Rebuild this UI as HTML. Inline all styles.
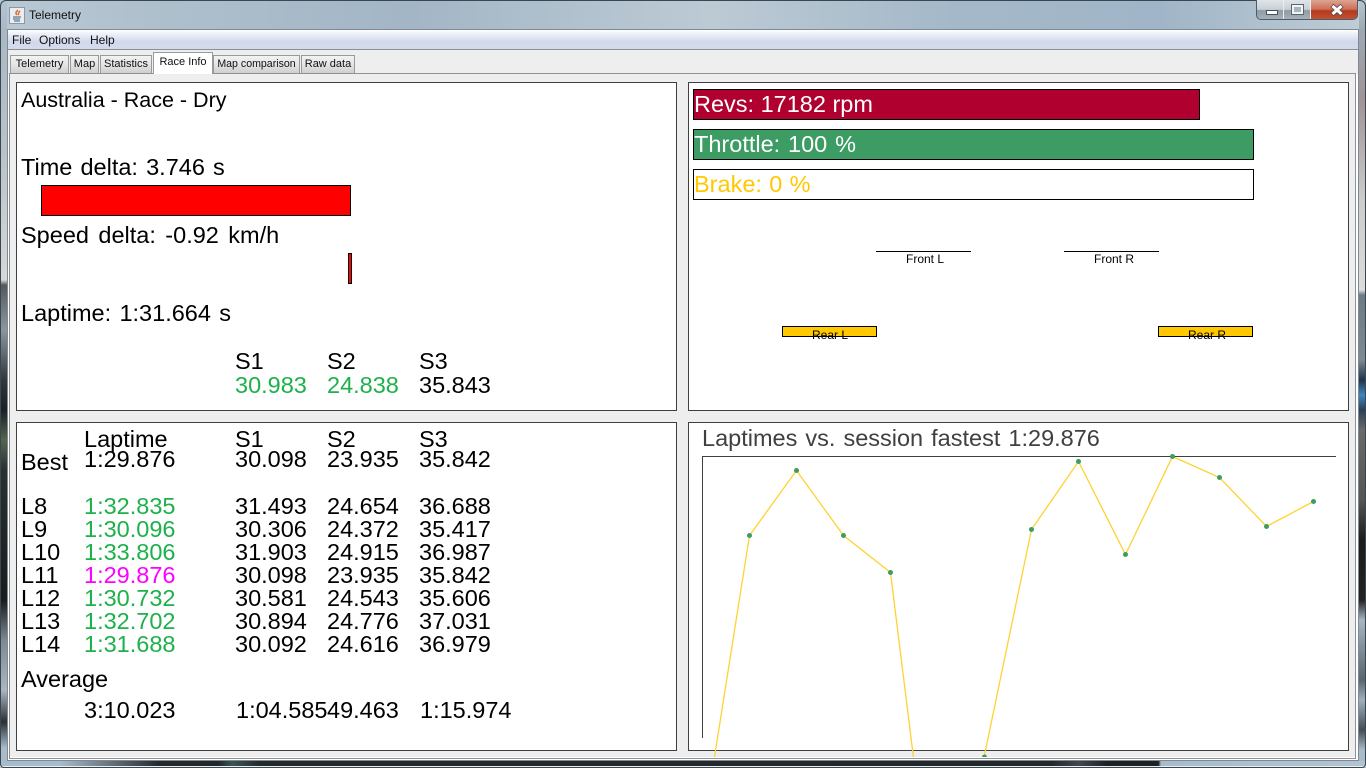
<!DOCTYPE html>
<html><head><meta charset="utf-8"><title>Telemetry</title>
<style>
html,body{margin:0;padding:0;width:1366px;height:768px;overflow:hidden;background:#a9bccb}
body{position:relative;font-family:"Liberation Sans",sans-serif}
div{position:absolute;box-sizing:border-box}
.tab{top:55px;height:18px;font-size:11px;line-height:17px;text-align:center;color:#111;background:linear-gradient(#f3f3f3,#e4e4e4 50%,#cfcfcf);border:1px solid #9a9a9a;border-bottom:0;white-space:nowrap}
.p{background:#fff;border:1px solid #3f3f3f}
svg{position:absolute;left:0;top:0}
svg text{font-family:"Liberation Sans",sans-serif;font-size:23.5px;fill:#000}
.g{fill:#1db14b}
.h{fill:#ff00ff}
</style></head><body>
<div style="left:0;top:0;width:1366px;height:30px;background:linear-gradient(90deg,#b9c8d3 0,#aebfcc 12%,#a3b6c6 30%,#bccad4 52%,#a4b8c9 70%,#a0b5c7 85%,#bfcdd6 100%)"></div>
<div style="left:0;top:0;width:7px;height:768px;background:linear-gradient(#b5c5d1 0,#a9b8c4 30px,#b9c2c8 150px,#d6d8d8 280px,#555a5a 285px,#8a96a0 330px,#33383c 380px,#1c2024 410px,#55654f 440px,#2a3030 470px,#1a1c1e 600px,#7c8892 640px,#aab6c2 690px,#2b3034 722px,#a9bccb 748px)"></div>
<div style="left:1359px;top:0;width:7px;height:768px;background:linear-gradient(#b6c5d0 0,#9fa9b2 30px,#9f9496 100px,#cccccc 200px,#dcdcdc 290px,#6d7b86 295px,#7d8a92 360px,#22344a 380px,#3f86c0 395px,#2c3f55 410px,#6a6a6a 430px,#555 500px,#1c1c1c 540px,#222 600px,#a5b5c3 620px,#596570 680px,#9fb0be 700px,#444c54 730px,#a9bccb 750px)"></div>
<div style="left:0;top:761px;width:1366px;height:5px;background:linear-gradient(90deg,#a9bccb 0,#a9bccb 4.400%,#26292c 11.700%,#25282b 16%,#3d5555 17%,#26292c 19%,#25282b 77%,#44484c 79%,#1f2225 81%,#1f2225 84.800%,#a9bccb 85%,#b3c3d0 100%)"></div>
<div style="left:0;top:766px;width:1366px;height:1px;background:#e8eef2"></div>
<div style="left:0;top:0;width:1366px;height:768px;border:1px solid #3a4650;border-radius:6px 6px 4px 4px"></div>
<div style="left:29px;top:8px;font-size:12px;line-height:15px;color:#111">Telemetry</div>
<svg width="20" height="20" style="left:8px;top:6px"><rect x="1.500" y="1.500" width="15" height="16" fill="#e9edf0" stroke="#8e98a2"/><path d="M10 4C8 6 7 7 9 9M12 5C10 7 10 8 11 9" stroke="#d8641c" stroke-width="1.400" fill="none"/><path d="M5 11h8M5 13h7M6 15h6" stroke="#5c7a99" stroke-width="1.200"/></svg>
<div style="left:1256px;top:0;width:102px;height:20px;border:1px solid #4c5c68;border-top:0;border-radius:0 0 5px 5px;overflow:hidden;background:linear-gradient(#dfe5e9,#c8d0d6 50%,#8f9ba5 55%,#a6b1b9)">
 <div style="left:26px;top:0;width:1px;height:20px;background:#e8edf0"></div>
 <div style="left:53px;top:0;width:48px;height:20px;background:linear-gradient(#dca594,#cf7058 45%,#b5391c 55%,#c4553a);border-left:1px solid #eee"></div>
 <div style="left:9px;top:10px;width:12px;height:5px;background:#fff;border:1px solid #46535e"></div>
 <div style="left:35px;top:5px;width:11px;height:9px;background:#aab4bc;border:2px solid #f3f3f3;outline:1px solid #5a6670"></div>
 <svg width="16" height="14" style="left:72px;top:3px"><path d="M3 2.500L13 11.500M13 2.500L3 11.500" stroke="#5a4a46" stroke-width="4.600"/><path d="M3.500 3L12.500 11M12.500 3L3.500 11" stroke="#fff" stroke-width="3"/></svg>
</div>
<div style="left:7px;top:29px;width:1352px;height:732px;background:#fff;border:1px solid #7d8a94"></div>
<div style="left:8px;top:30px;width:1350px;height:20px;background:linear-gradient(#fff 0,#eef0f8 20%,#d2d9ec 60%,#d3daec);border-bottom:1px solid #8a8f98"></div>
<div style="left:8px;top:50px;width:1350px;height:24px;background:#eee"></div>
<div style="left:12px;top:33px;font-size:12px;line-height:14px;color:#111;white-space:pre">File</div>
<div style="left:39px;top:33px;font-size:12px;line-height:14px;color:#111">Options</div>
<div style="left:90px;top:33px;font-size:12px;line-height:14px;color:#111">Help</div>
<div style="left:9px;top:73px;width:1347px;height:686px;border:1px solid #8e9296;background:#eee"></div>
<div style="left:10px;top:757px;width:1345px;height:1px;background:#fff"></div>
<div class="tab" style="left:10px;width:59px">Telemetry</div>
<div class="tab" style="left:70px;width:29px">Map</div>
<div class="tab" style="left:100px;width:52px">Statistics</div>
<div class="tab" style="left:153px;width:60px;top:52px;height:22px;background:#fff;line-height:19px;z-index:2">Race Info</div>
<div class="tab" style="left:213px;width:87px;font-size:10.600px">Map comparison</div>
<div class="tab" style="left:301px;width:54px">Raw data</div>
<div class="p" style="left:16px;top:82px;width:661px;height:329px"></div>
<div class="p" style="left:688px;top:82px;width:661px;height:329px"></div>
<div class="p" style="left:16px;top:422px;width:661px;height:329px"></div>
<div class="p" style="left:688px;top:422px;width:661px;height:329px"></div>
<svg width="1366" height="768">
<text x="21" y="107" style="font-size:21.500px">Australia - Race - Dry</text>
<text x="21" y="175" style="word-spacing:1.600px">Time delta: 3.746 s</text>
<rect x="41.500" y="185.500" width="309" height="30" fill="#f00" stroke="#000"/>
<text x="21" y="243" style="word-spacing:2.900px">Speed delta: -0.92 km/h</text>
<rect x="348.500" y="253.500" width="3" height="30" fill="#f00" stroke="#000"/>
<text x="21" y="321" style="word-spacing:1.800px">Laptime: 1:31.664 s</text>
<text x="235" y="369">S1</text><text x="327" y="369">S2</text><text x="419" y="369">S3</text>
<text x="235" y="393" class="g">30.983</text><text x="327" y="393" class="g">24.838</text><text x="419" y="393">35.843</text>

<rect x="693.500" y="89.500" width="506" height="30" fill="#b00030" stroke="#000"/>
<text x="694" y="112" style="fill:#fff">Revs: 17182 rpm</text>
<rect x="693.500" y="129.500" width="560" height="30" fill="#3c9c64" stroke="#000"/>
<text x="694" y="152" style="fill:#fff;word-spacing:1.300px">Throttle: 100 %</text>
<rect x="693.500" y="169.500" width="560" height="30" fill="#fff" stroke="#000"/>
<text x="694" y="192" style="fill:#ffc800;word-spacing:.8px">Brake: 0 %</text>

<rect x="876" y="251" width="95" height="1" fill="#000"/>
<text x="906" y="263" style="font-size:12px">Front L</text>
<rect x="1064" y="251" width="95" height="1" fill="#000"/>
<text x="1094" y="263" style="font-size:12px">Front R</text>
<rect x="782.500" y="326.500" width="94" height="10" fill="#ffc800" stroke="#000"/>
<text x="812" y="339" style="font-size:12px">Rear L</text>
<rect x="1158.500" y="326.500" width="94" height="10" fill="#ffc800" stroke="#000"/>
<text x="1188" y="339" style="font-size:12px">Rear R</text>

<text x="84" y="447">Laptime</text><text x="235" y="447">S1</text><text x="327" y="447">S2</text><text x="419" y="447">S3</text>
<text x="21" y="470">Best</text><text x="84" y="467">1:29.876</text><text x="235" y="467">30.098</text><text x="327" y="467">23.935</text><text x="419" y="467">35.842</text>
<text x="21" y="514">L8</text><text x="84" y="514" class="g">1:32.835</text><text x="235" y="514">31.493</text><text x="327" y="514">24.654</text><text x="419" y="514">36.688</text>
<text x="21" y="537">L9</text><text x="84" y="537" class="g">1:30.096</text><text x="235" y="537">30.306</text><text x="327" y="537">24.372</text><text x="419" y="537">35.417</text>
<text x="21" y="560">L10</text><text x="84" y="560" class="g">1:33.806</text><text x="235" y="560">31.903</text><text x="327" y="560">24.915</text><text x="419" y="560">36.987</text>
<text x="21" y="583">L11</text><text x="84" y="583" class="h">1:29.876</text><text x="235" y="583">30.098</text><text x="327" y="583">23.935</text><text x="419" y="583">35.842</text>
<text x="21" y="606">L12</text><text x="84" y="606" class="g">1:30.732</text><text x="235" y="606">30.581</text><text x="327" y="606">24.543</text><text x="419" y="606">35.606</text>
<text x="21" y="629">L13</text><text x="84" y="629" class="g">1:32.702</text><text x="235" y="629">30.894</text><text x="327" y="629">24.776</text><text x="419" y="629">37.031</text>
<text x="21" y="652">L14</text><text x="84" y="652" class="g">1:31.688</text><text x="235" y="652">30.092</text><text x="327" y="652">24.616</text><text x="419" y="652">36.979</text>
<text x="21" y="687">Average</text>
<text x="84" y="718">3:10.023</text><text x="236" y="718">1:04.585</text><text x="327" y="718">49.463</text><text x="420" y="718">1:15.974</text>

<text x="702" y="446" style="fill:#404040;word-spacing:1.500px">Laptimes vs. session fastest 1:29.876</text>
<path d="M702.500 738V456.500H1336" fill="none" stroke="#404040"/>
<g fill="none" stroke="#ffd232" stroke-width="1.300">
<polyline points="714.500,757 749.500,535.500 796.500,470.500 843.500,535.500 890.500,572.500 913.400,757"/>
<polyline points="984,757 984.500,755 1031.500,529.500 1078.500,461.500 1125.500,554.500 1172.500,456.500 1219.500,477.500 1266.500,526.500 1313.500,501.500"/>
</g>
<g fill="#3c9c64"><circle cx="749.500" cy="535.500" r="2.500"/><circle cx="796.500" cy="470.500" r="2.500"/><circle cx="843.500" cy="535.500" r="2.500"/><circle cx="890.500" cy="572.500" r="2.500"/><path d="M982 757A2.500 2.500 0 0 1 987 757Z"/><circle cx="1031.500" cy="529.500" r="2.500"/><circle cx="1078.500" cy="461.500" r="2.500"/><circle cx="1125.500" cy="554.500" r="2.500"/><circle cx="1172.500" cy="456.500" r="2.500"/><circle cx="1219.500" cy="477.500" r="2.500"/><circle cx="1266.500" cy="526.500" r="2.500"/><circle cx="1313.500" cy="501.500" r="2.500"/></g>
</svg>
</body></html>
